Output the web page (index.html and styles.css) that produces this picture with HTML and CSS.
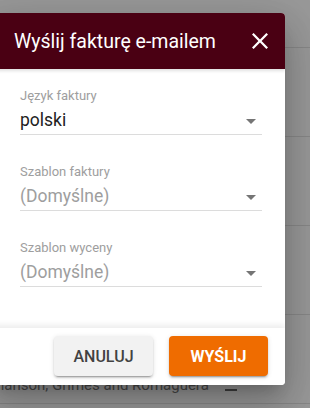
FILE: index.html
```html
<!DOCTYPE html>
<html lang="pl">
<head>
    <meta charset="UTF-8">
    <meta name="viewport" content="width=device-width, initial-scale=1.0">
    <title>Wyślij fakturę e-mailem</title>
    <link rel="stylesheet" href="styles.css">
</head>
<body>
    <!-- page behind the dialog -->
    <div class="page">
        <div class="row row-first"></div>
        <div class="row"></div>
        <div class="row"></div>
        <div class="row"></div>
        <div class="row row-client">
            <span class="client-name">hanson, Grimes and Romaguera</span>
            <span class="client-icon"></span>
        </div>
    </div>

    <div class="backdrop"></div>

    <div class="dialog">
        <div class="dialog-header">
            <h2>Wyślij fakturę e-mailem</h2>
            <svg class="close" width="16" height="16" viewBox="5 5 14 14">
                <path d="M19 6.41L17.59 5 12 10.59 6.41 5 5 6.41 10.59 12 5 17.59 6.41 19 12 13.41 17.59 19 19 17.59 13.41 12z" fill="#fff"/>
            </svg>
        </div>

        <div class="dialog-content">
            <div class="field">
                <label>Język faktury</label>
                <div class="select">
                    <span class="value">polski</span>
                    <svg class="arrow" width="10" height="5" viewBox="0 0 10 5"><path d="M0 0l5 5 5-5z" fill="#757575"/></svg>
                </div>
            </div>
            <div class="field">
                <label>Szablon faktury</label>
                <div class="select">
                    <span class="value placeholder">(Domyślne)</span>
                    <svg class="arrow" width="10" height="5" viewBox="0 0 10 5"><path d="M0 0l5 5 5-5z" fill="#757575"/></svg>
                </div>
            </div>
            <div class="field">
                <label>Szablon wyceny</label>
                <div class="select">
                    <span class="value placeholder">(Domyślne)</span>
                    <svg class="arrow" width="10" height="5" viewBox="0 0 10 5"><path d="M0 0l5 5 5-5z" fill="#757575"/></svg>
                </div>
            </div>
        </div>

        <div class="dialog-actions">
            <button class="btn btn-cancel">Anuluj</button>
            <button class="btn btn-send">Wyślij</button>
        </div>
    </div>
</body>
</html>
```

FILE: styles.css
```css
body {
    margin: 0;
    width: 310px;
    height: 408px;
    overflow: hidden;
    position: relative;
    background: #fff;
    font-family: Roboto, "Liberation Sans", sans-serif;
}
.page {
    display: flex;
    flex-direction: column;
}
.row {
    height: 88px;
    border-bottom: 1px solid #e3e3e3;
    box-sizing: content-box;
}
.row-first {
    height: 47px;
}
.row-client {
    display: flex;
    align-items: flex-end;
    gap: 16px;
}
.client-name {
    font-size: 15px;
    color: #7a7a7a;
    margin-left: -4px;
    margin-bottom: 9px;
    line-height: 18px;
}
.client-icon {
    width: 12px;
    height: 2px;
    background: #6a6a6a;
    margin-bottom: 12px;
}
.backdrop {
    position: absolute;
    inset: 0;
    background: rgba(0, 0, 0, 0.4);
}
.dialog {
    position: absolute;
    left: -10px;
    top: 13px;
    width: 295px;
    background: #fff;
    border-radius: 4px;
    overflow: hidden;
    box-shadow: 0 11px 15px -7px rgba(0,0,0,.2), 0 24px 38px 3px rgba(0,0,0,.14), 0 9px 46px 8px rgba(0,0,0,.12);
}
.dialog-header {
    height: 56px;
    background: #4a0013;
    display: flex;
    align-items: center;
    justify-content: space-between;
    padding: 0 17px 0 24px;
    position: relative;
    box-shadow: 0 2px 3px rgba(0,0,0,.12);
}
.dialog-header h2 {
    margin: 0;
    color: #fff;
    font-weight: 400;
    font-size: 19.5px;
}
.dialog-content {
    padding: 19px 23px 41px 30px;
    display: flex;
    flex-direction: column;
    gap: 29px;
}
.field label {
    display: block;
    font-size: 13px;
    line-height: 16px;
    color: #9e9e9e;
    margin-bottom: 4px;
}
.select {
    display: flex;
    align-items: center;
    justify-content: space-between;
    border-bottom: 1px solid #dcdcdc;
    padding-bottom: 2px;
}
.value {
    font-size: 17.5px;
    line-height: 24px;
    color: #222;
}
.value.placeholder {
    color: #9e9e9e;
}
.arrow {
    margin-right: 6px;
    margin-top: 3px;
}
.dialog-actions {
    position: relative;
    display: flex;
    justify-content: flex-end;
    gap: 16px;
    padding: 8px 17px 9px;
    background: #fff;
    box-shadow: 0 -3px 6px rgba(0,0,0,.08);
}
.btn {
    width: 99px;
    height: 40px;
    border: none;
    border-radius: 4px;
    font-family: Roboto, "Liberation Sans", sans-serif;
    font-size: 16px;
    font-weight: 500;
    text-transform: uppercase;
    box-shadow: 0 3px 1px -2px rgba(0,0,0,.2), 0 2px 2px 0 rgba(0,0,0,.14), 0 1px 5px 0 rgba(0,0,0,.12);
}
.btn-cancel {
    background: #f2f2f2;
    color: #424242;
}
.btn-send {
    background: #ef6c00;
    color: #fff;
    font-weight: 700;
}
```
